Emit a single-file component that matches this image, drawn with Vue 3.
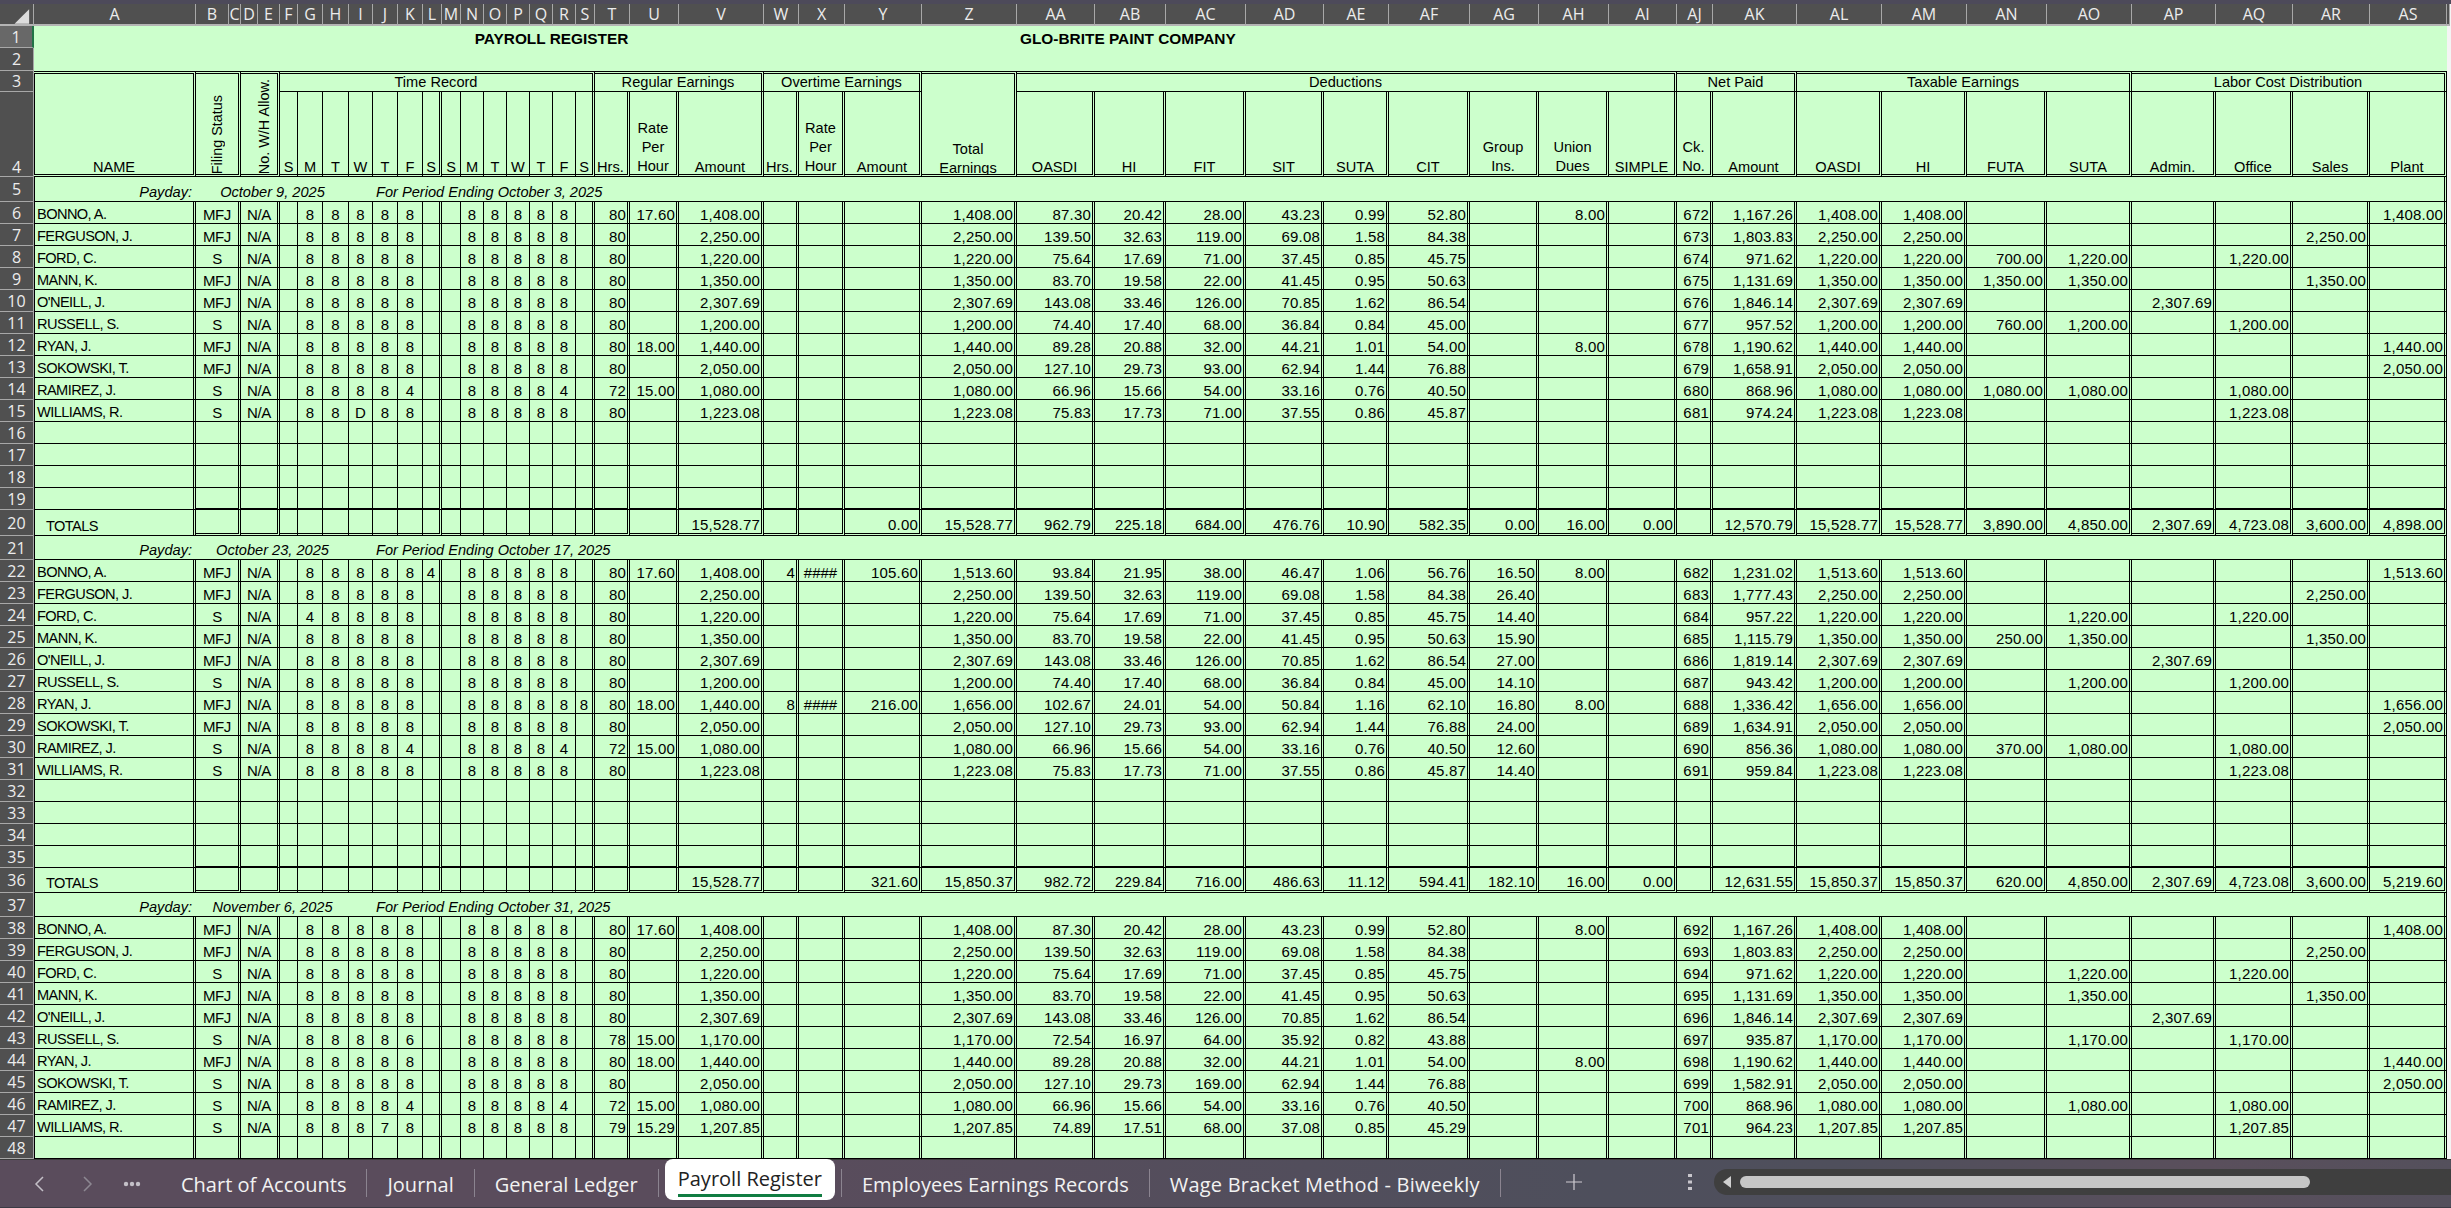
<script setup>
const letters = [...'ABCDEFGHIJKLMNOPQRSTUVWXYZ']
const cols = [...letters, ...'ABCDEFGHIJKLMNOPQRS'.split('').map((l) => 'A' + l)]
const colNo = (name) => cols.indexOf(name) + 2

const singleRight = new Set(['F', 'G', 'H', 'I', 'J', 'K', 'M', 'N', 'O', 'P', 'Q', 'R'])
const rightClass = (name) => (singleRight.has(name) ? 'rs' : 'rd')

const cells = []
let id = 0
function put(row, from, to, text, cls = [], rowSpan = 1) {
  cells.push({
    id: id++,
    text,
    cls: ['cell', rightClass(to), ...cls],
    area: `${row + 1} / ${colNo(from)} / span ${rowSpan} / span ${colNo(to) - colNo(from) + 1}`
  })
}

// Rows 1 and 2: title band
function plain(row, from, to, text = '', cls = []) {
  cells.push({
    id: id++,
    text,
    cls: ['cell', 'plain', ...cls],
    area: `${row + 1} / ${colNo(from)} / span 1 / span ${colNo(to) - colNo(from) + 1}`
  })
}
plain(1, 'A', 'D')
plain(1, 'E', 'X', 'PAYROLL REGISTER', ['title', 'ctr'])
plain(1, 'Y', 'Z')
plain(1, 'AA', 'AS', 'GLO-BRITE PAINT COMPANY', ['title'])
plain(2, 'A', 'AS')

// Rows 3 and 4: column headings
const hdr3 = ['top', 'bb', 'ctr', 'band']
const hdr4 = ['bot', 'ctr', 'hd']
put(3, 'A', 'A', 'NAME', ['top', 'bot', 'ctr', 'hd', 'lb'], 2)
put(3, 'B', 'C', 'Filing Status', ['top', 'bot', 'ctr', 'vert'], 2)
put(3, 'D', 'E', 'No. W/H Allow.', ['top', 'bot', 'end', 'vert'], 2)
put(3, 'F', 'S', 'Time Record', hdr3)
put(3, 'T', 'V', 'Regular Earnings', hdr3)
put(3, 'W', 'Y', 'Overtime Earnings', hdr3)
put(3, 'Z', 'Z', 'Total\nEarnings', ['top', 'bot', 'ctr', 'hd', 'low'], 2)
put(3, 'AA', 'AI', 'Deductions', hdr3)
put(3, 'AJ', 'AK', 'Net Paid', hdr3)
put(3, 'AL', 'AO', 'Taxable Earnings', hdr3)
put(3, 'AP', 'AS', 'Labor Cost Distribution', hdr3)
const heads4 = {
  F: 'S', G: 'M', H: 'T', I: 'W', J: 'T', K: 'F', L: 'S',
  M: 'S', N: 'M', O: 'T', P: 'W', Q: 'T', R: 'F', S: 'S',
  T: 'Hrs.', U: 'Rate\nPer\nHour', V: 'Amount', W: 'Hrs.', X: 'Rate\nPer\nHour', Y: 'Amount',
  AA: 'OASDI', AB: 'HI', AC: 'FIT', AD: 'SIT', AE: 'SUTA', AF: 'CIT',
  AG: 'Group\nIns.', AH: 'Union\nDues', AI: 'SIMPLE', AJ: 'Ck.\nNo.', AK: 'Amount',
  AL: 'OASDI', AM: 'HI', AN: 'FUTA', AO: 'SUTA',
  AP: 'Admin.', AQ: 'Office', AR: 'Sales', AS: 'Plant'
}
for (const [name, text] of Object.entries(heads4)) {
  const left = name === 'T' || name === 'W'
  const multi = text.includes('\n') ? ['multi'] : []
  put(4, name, name, text, left ? ['bot', 'hd', 'pl1'] : [...hdr4, ...multi])
}

// Payday bands
function band(row, date, period) {
  const base = ['it', 'bb']
  plain(row, 'A', 'A', 'Payday:', [...base, 'lb', 'rt', 'pr4'])
  plain(row, 'B', 'H', date, [...base, 'ctr'])
  plain(row, 'I', 'I', '', base)
  cells.push({
    id: id++,
    text: period,
    cls: ['cell', 'rd', ...base, 'pl3'],
    area: `${row + 1} / ${colNo('J')} / span 1 / span ${colNo('AS') - colNo('J') + 1}`
  })
}

const rightCols = ['T', 'U', 'V', 'W', 'X', 'Y', 'Z', 'AA', 'AB', 'AC', 'AD', 'AE', 'AF', 'AG', 'AH', 'AI', 'AJ', 'AK', 'AL', 'AM', 'AN', 'AO', 'AP', 'AQ', 'AR', 'AS']
const hourCols = ['F', 'G', 'H', 'I', 'J', 'K', 'L', 'M', 'N', 'O', 'P', 'Q', 'R', 'S']
const blank = { name: '', st: '', hrs: '              ', vals: rightCols.map(() => '') }

function emp(name, st, hrs, hr, rate, amt, ot, tot, ded, grp, uni, ck, net, futa, suta, dept) {
  const d = ded.split(' ')
  return {
    name, st, hrs,
    vals: [
      hr, rate, amt, ot[0] || '', ot[1] || '', ot[2] || '', tot, ...d, grp, uni, '', ck, net, tot, tot, futa, suta,
      dept === 'A' ? tot : '', dept === 'O' ? tot : '', dept === 'S' ? tot : '', dept === 'P' ? tot : ''
    ]
  }
}

const W = ' 88888  88888 '
const block1 = [
  emp('BONNO, A.', 'MFJ', W, '80', '17.60', '1,408.00', [], '1,408.00', '87.30 20.42 28.00 43.23 0.99 52.80', '', '8.00', '672', '1,167.26', '', '', 'P'),
  emp('FERGUSON, J.', 'MFJ', W, '80', '', '2,250.00', [], '2,250.00', '139.50 32.63 119.00 69.08 1.58 84.38', '', '', '673', '1,803.83', '', '', 'S'),
  emp('FORD, C.', 'S', W, '80', '', '1,220.00', [], '1,220.00', '75.64 17.69 71.00 37.45 0.85 45.75', '', '', '674', '971.62', '700.00', '1,220.00', 'O'),
  emp('MANN, K.', 'MFJ', W, '80', '', '1,350.00', [], '1,350.00', '83.70 19.58 22.00 41.45 0.95 50.63', '', '', '675', '1,131.69', '1,350.00', '1,350.00', 'S'),
  emp("O'NEILL, J.", 'MFJ', W, '80', '', '2,307.69', [], '2,307.69', '143.08 33.46 126.00 70.85 1.62 86.54', '', '', '676', '1,846.14', '', '', 'A'),
  emp('RUSSELL, S.', 'S', W, '80', '', '1,200.00', [], '1,200.00', '74.40 17.40 68.00 36.84 0.84 45.00', '', '', '677', '957.52', '760.00', '1,200.00', 'O'),
  emp('RYAN, J.', 'MFJ', W, '80', '18.00', '1,440.00', [], '1,440.00', '89.28 20.88 32.00 44.21 1.01 54.00', '', '8.00', '678', '1,190.62', '', '', 'P'),
  emp('SOKOWSKI, T.', 'MFJ', W, '80', '', '2,050.00', [], '2,050.00', '127.10 29.73 93.00 62.94 1.44 76.88', '', '', '679', '1,658.91', '', '', 'P'),
  emp('RAMIREZ, J.', 'S', ' 88884  88884 ', '72', '15.00', '1,080.00', [], '1,080.00', '66.96 15.66 54.00 33.16 0.76 40.50', '', '', '680', '868.96', '1,080.00', '1,080.00', 'O'),
  emp('WILLIAMS, R.', 'S', ' 88D88  88888 ', '80', '', '1,223.08', [], '1,223.08', '75.83 17.73 71.00 37.55 0.86 45.87', '', '', '681', '974.24', '', '', 'O')
]
const block2 = [
  emp('BONNO, A.', 'MFJ', ' 888884 88888 ', '80', '17.60', '1,408.00', ['4', '####', '105.60'], '1,513.60', '93.84 21.95 38.00 46.47 1.06 56.76', '16.50', '8.00', '682', '1,231.02', '', '', 'P'),
  emp('FERGUSON, J.', 'MFJ', W, '80', '', '2,250.00', [], '2,250.00', '139.50 32.63 119.00 69.08 1.58 84.38', '26.40', '', '683', '1,777.43', '', '', 'S'),
  emp('FORD, C.', 'S', ' 48888  88888 ', '80', '', '1,220.00', [], '1,220.00', '75.64 17.69 71.00 37.45 0.85 45.75', '14.40', '', '684', '957.22', '', '1,220.00', 'O'),
  emp('MANN, K.', 'MFJ', W, '80', '', '1,350.00', [], '1,350.00', '83.70 19.58 22.00 41.45 0.95 50.63', '15.90', '', '685', '1,115.79', '250.00', '1,350.00', 'S'),
  emp("O'NEILL, J.", 'MFJ', W, '80', '', '2,307.69', [], '2,307.69', '143.08 33.46 126.00 70.85 1.62 86.54', '27.00', '', '686', '1,819.14', '', '', 'A'),
  emp('RUSSELL, S.', 'S', W, '80', '', '1,200.00', [], '1,200.00', '74.40 17.40 68.00 36.84 0.84 45.00', '14.10', '', '687', '943.42', '', '1,200.00', 'O'),
  emp('RYAN, J.', 'MFJ', ' 88888  888888', '80', '18.00', '1,440.00', ['8', '####', '216.00'], '1,656.00', '102.67 24.01 54.00 50.84 1.16 62.10', '16.80', '8.00', '688', '1,336.42', '', '', 'P'),
  emp('SOKOWSKI, T.', 'MFJ', W, '80', '', '2,050.00', [], '2,050.00', '127.10 29.73 93.00 62.94 1.44 76.88', '24.00', '', '689', '1,634.91', '', '', 'P'),
  emp('RAMIREZ, J.', 'S', ' 88884  88884 ', '72', '15.00', '1,080.00', [], '1,080.00', '66.96 15.66 54.00 33.16 0.76 40.50', '12.60', '', '690', '856.36', '370.00', '1,080.00', 'O'),
  emp('WILLIAMS, R.', 'S', W, '80', '', '1,223.08', [], '1,223.08', '75.83 17.73 71.00 37.55 0.86 45.87', '14.40', '', '691', '959.84', '', '', 'O')
]
const block3 = [
  emp('BONNO, A.', 'MFJ', W, '80', '17.60', '1,408.00', [], '1,408.00', '87.30 20.42 28.00 43.23 0.99 52.80', '', '8.00', '692', '1,167.26', '', '', 'P'),
  emp('FERGUSON, J.', 'MFJ', W, '80', '', '2,250.00', [], '2,250.00', '139.50 32.63 119.00 69.08 1.58 84.38', '', '', '693', '1,803.83', '', '', 'S'),
  emp('FORD, C.', 'S', W, '80', '', '1,220.00', [], '1,220.00', '75.64 17.69 71.00 37.45 0.85 45.75', '', '', '694', '971.62', '', '1,220.00', 'O'),
  emp('MANN, K.', 'MFJ', W, '80', '', '1,350.00', [], '1,350.00', '83.70 19.58 22.00 41.45 0.95 50.63', '', '', '695', '1,131.69', '', '1,350.00', 'S'),
  emp("O'NEILL, J.", 'MFJ', W, '80', '', '2,307.69', [], '2,307.69', '143.08 33.46 126.00 70.85 1.62 86.54', '', '', '696', '1,846.14', '', '', 'A'),
  emp('RUSSELL, S.', 'S', ' 88886  88888 ', '78', '15.00', '1,170.00', [], '1,170.00', '72.54 16.97 64.00 35.92 0.82 43.88', '', '', '697', '935.87', '', '1,170.00', 'O'),
  emp('RYAN, J.', 'MFJ', W, '80', '18.00', '1,440.00', [], '1,440.00', '89.28 20.88 32.00 44.21 1.01 54.00', '', '8.00', '698', '1,190.62', '', '', 'P'),
  emp('SOKOWSKI, T.', 'S', W, '80', '', '2,050.00', [], '2,050.00', '127.10 29.73 169.00 62.94 1.44 76.88', '', '', '699', '1,582.91', '', '', 'P'),
  emp('RAMIREZ, J.', 'S', ' 88884  88884 ', '72', '15.00', '1,080.00', [], '1,080.00', '66.96 15.66 54.00 33.16 0.76 40.50', '', '', '700', '868.96', '', '1,080.00', 'O'),
  emp('WILLIAMS, R.', 'S', ' 88878  88888 ', '79', '15.29', '1,207.85', [], '1,207.85', '74.89 17.51 68.00 37.08 0.85 45.29', '', '', '701', '964.23', '', '', 'O')
]

function dataRow(row, data, extra) {
  put(row, 'A', 'A', data.name, ['bb', 'name', 'lb', ...extra.a])
  put(row, 'B', 'C', data.st, ['bb', 'ctr', 'name0', ...extra.r])
  put(row, 'D', 'E', data.na ?? (data.name ? 'N/A' : ''), ['bb', 'ctr', 'name0', ...extra.r])
  hourCols.forEach((c, i) => {
    const v = data.hrs[i].trim()
    put(row, c, c, v, ['bb', 'ctr', 'hr', ...extra.r])
  })
  rightCols.forEach((c, i) => {
    const v = data.vals[i]
    put(row, c, c, v, ['bb', 'num', v === '####' ? 'ctr' : 'rt', ...extra.r])
  })
}

function totals(row, v) {
  const all = rightCols.map(() => '')
  all[rightCols.indexOf('V')] = v[0]
  all[rightCols.indexOf('Y')] = v[1]
  const rest = v.slice(2)
  const seq = ['Z', 'AA', 'AB', 'AC', 'AD', 'AE', 'AF', 'AG', 'AH', 'AI', 'AK', 'AL', 'AM', 'AN', 'AO', 'AP', 'AQ', 'AR', 'AS']
  seq.forEach((c, i) => { all[rightCols.indexOf(c)] = rest[i] })
  dataRow(row, { name: 'TOTALS', st: '', na: '', hrs: '              ', vals: all }, { a: ['ttl'], r: ['dbot'] })
}

function block(start, list, payday, period, total) {
  band(start - 1, payday, period)
  for (let i = 0; i < 14; i++) {
    const last = i === 13
    dataRow(start + i, list[i] || blank, { a: [], r: last ? ['thick'] : [] })
  }
  totals(start + 14, total)
}

block(6, block1, 'October 9, 2025', 'For Period Ending October 3, 2025', ['15,528.77', '0.00', '15,528.77', '962.79', '225.18', '684.00', '476.76', '10.90', '582.35', '0.00', '16.00', '0.00', '12,570.79', '15,528.77', '15,528.77', '3,890.00', '4,850.00', '2,307.69', '4,723.08', '3,600.00', '4,898.00'])
block(22, block2, 'October 23, 2025', 'For Period Ending October 17, 2025', ['15,528.77', '321.60', '15,850.37', '982.72', '229.84', '716.00', '486.63', '11.12', '594.41', '182.10', '16.00', '0.00', '12,631.55', '15,850.37', '15,850.37', '620.00', '4,850.00', '2,307.69', '4,723.08', '3,600.00', '5,219.60'])
band(37, 'November 6, 2025', 'For Period Ending October 31, 2025')
block3.forEach((d, i) => dataRow(38 + i, d, { a: [], r: [] }))
dataRow(48, blank, { a: [], r: [] })

const rowNums = Array.from({ length: 48 }, (_, i) => i + 1)
const tabsLeft = ['Chart of Accounts', 'Journal', 'General Ledger']
</script>

<template>
  <div class="app">
    <div class="topline"></div>
    <div class="sheet">
      <div class="corner">
        <svg width="34" height="26" viewBox="0 0 34 26"><polygon points="15,23 30,8 30,23" fill="#dcdcdc" /></svg>
      </div>
      <div v-for="c in cols" :key="c" class="colhead">{{ c }}</div>
      <div class="colhead"></div>
      <div
        v-for="n in rowNums"
        :key="'r' + n"
        class="rowhead"
        :class="{ sel: n === 1, tall: n === 4 }"
        :style="{ gridArea: `${n + 1} / 1` }"
      >{{ n }}</div>
      <div v-for="cell in cells" :key="cell.id" :class="cell.cls" :style="{ gridArea: cell.area }"><span>{{ cell.text }}</span></div>
    </div>
    <div class="tabbar">
      <div class="nav">
        <svg class="chev" width="12" height="18" viewBox="0 0 12 18"><path d="M10 2 L3 9 L10 16" fill="none" stroke="#c4c0c8" stroke-width="1.5" /></svg>
        <svg class="chev next" width="12" height="18" viewBox="0 0 12 18"><path d="M2 2 L9 9 L2 16" fill="none" stroke="#8d8892" stroke-width="1.5" /></svg>
        <svg class="more" width="18" height="6" viewBox="0 0 18 6"><circle cx="3" cy="3" r="2.2" fill="#c4c0c8" /><circle cx="9" cy="3" r="2.2" fill="#c4c0c8" /><circle cx="15" cy="3" r="2.2" fill="#c4c0c8" /></svg>
      </div>
      <template v-for="t in tabsLeft" :key="t">
        <div class="tab">{{ t }}</div>
        <i class="sep"></i>
      </template>
      <div class="tab active"><span class="label">Payroll Register</span></div>
      <i class="sep"></i>
      <div class="tab">Employees Earnings Records</div>
      <i class="sep"></i>
      <div class="tab wage">Wage Bracket Method - Biweekly</div>
      <i class="sep"></i>
      <svg class="plus" width="18" height="18" viewBox="0 0 18 18"><path d="M9 1 V17 M1 9 H17" stroke="#cfccd2" stroke-width="1.2" /></svg>
      <svg class="vdots" width="6" height="18" viewBox="0 0 6 18"><rect x="1" y="1" width="4" height="3" fill="#c8c6cc" /><rect x="1" y="7.5" width="4" height="3" fill="#c8c6cc" /><rect x="1" y="14" width="4" height="3" fill="#c8c6cc" /></svg>
      <div class="track">
        <svg class="arrow" width="10" height="12" viewBox="0 0 10 12"><polygon points="9,0 9,12 1,6" fill="#d0d0d0" /></svg>
        <div class="thumb"></div>
      </div>
    </div>
  </div>
</template>

<style>
html, body { margin: 0; overflow: hidden; background: #4e4a5a; }
</style>

<style scoped>
.app {
  width: 2451px;
  height: 1208px;
  display: flex;
  flex-direction: column;
  overflow: hidden;
  background: #4e4a5a;
}
.topline { height: 4px; flex: none; background: #4d4a5a; }
.sheet {
  flex: 1;
  min-height: 0;
  overflow: hidden;
  display: grid;
  background: #f4f4f4;
  font-family: "Liberation Sans", Arial, sans-serif;
  font-size: 14.6px;
  color: #000;
  grid-template-columns:
    34px 162px 33px 12px 17px 22px 18px 25px 26px 24px 25px 25px 19px 19px 23px 23px 23px 23px 23px 19px
    35px 49px 85px 35px 46px 77px 95px 78px 71px 80px 78px 65px 81px 69px 70px 68px 36px 84px 85px 85px 80px 85px 84px 77px 77px 77px 3px;
  grid-template-rows:
    22px 22px 23px 21px 85px 25px
    repeat(14, 22px) 26px 24px
    repeat(14, 22px) 25px 24px
    repeat(11, 22px);
}
.corner, .colhead, .rowhead {
  background: #505050;
  color: #ececec;
  font-family: "Open Sans", "Noto Sans", sans-serif;
  font-size: 16px;
  box-sizing: border-box;
  display: flex;
  align-items: center;
  justify-content: center;
}
.corner { border-right: 1px solid #a8a8a8; border-bottom: 2px solid #b4b4b4; }
.colhead { border-right: 1px solid #a8a8a8; border-bottom: 2px solid #b4b4b4; overflow: hidden; }
.rowhead { border-right: 1px solid #a8a8a8; border-bottom: 1px solid #a8a8a8; }
.rowhead.sel { background: #686868; border-right: 2px solid #217346; }
.rowhead.tall { align-items: flex-end; line-height: 18px; }

.cell {
  box-sizing: border-box;
  background: #ccffcc;
  display: flex;
  align-items: flex-end;
  white-space: pre;
  line-height: 17px;
  min-width: 0;
  overflow: hidden;
}
.cell span { display: block; }
.rd { border-right: 3px double #000; }
.rs { border-right: 1px solid #000; }
.bb { border-bottom: 1px solid #000; }
.thick { border-bottom: 2px solid #000; }
.dbot { border-bottom: 3px double #000; }
.top { border-top: 3px double #000; }
.bot { border-bottom: 3px double #000; }
.lb { border-left: 1px solid #000; }
.ctr { justify-content: center; text-align: center; }
.rt { justify-content: flex-end; text-align: right; }
.end { justify-content: flex-end; padding-right: 3px; }
.pl1 { padding-left: 2px; }
.pl3 { padding-left: 3px; }
.pr4 { padding-right: 4px; }
.hd { line-height: 19px; }
.hd span { margin-bottom: -3px; }
.hd.multi span { margin-bottom: -2px; }
.hd.low span { margin-bottom: -4px; }
.hr { font-size: 15px; }
.num { padding-right: 1px; font-size: 15px; letter-spacing: 0.2px; }
.num.ctr { padding-right: 0; letter-spacing: 0; }
.name { padding-left: 2px; letter-spacing: -0.58px; }
.name0 { font-size: 15px; letter-spacing: -0.4px; }
.ttl { padding-left: 11px; }
.it { font-style: italic; }
.title { font-weight: 700; font-size: 15.4px; padding-bottom: 1px; }
.plain.title:not(.ctr) { padding-left: 3px; }
.vert span {
  writing-mode: vertical-rl;
  transform: rotate(180deg);
  line-height: 20px;
  font-size: 14.4px;
}

.tabbar {
  flex: none;
  height: 49px;
  box-sizing: border-box;
  display: flex;
  align-items: flex-start;
  border-top: 1px solid #3c3c3c;
  border-bottom: 1px solid #3a3a44;
  background: linear-gradient(90deg, #5a4c5c 0%, #5a4c5c 30%, #4e4f5c 65%, #4f4f5c 75%, #5a4f5c 90%, #54505c 100%);
  font-family: "Open Sans", "Noto Sans", sans-serif;
  font-size: 20px;
  color: #f2f2f2;
}
.nav { width: 161px; flex: none; height: 47px; display: flex; align-items: center; }
.chev { margin-left: 33px; flex: none; }
.chev.next { margin-left: 37px; }
.more { margin-left: 29px; flex: none; }
.tab {
  flex: none;
  padding: 0 20px;
  height: 47px;
  line-height: 50px;
  white-space: nowrap;
}
.tab.wage { letter-spacing: 0.2px; }
.sep { flex: none; width: 1px; height: 28px; margin-top: 9px; background: #8b8490; }
.tab.active {
  background: #fff;
  color: #222;
  height: 41px;
  margin: -1px 6px 0;
  padding: 0 13px;
  border-radius: 8px;
  line-height: 40px;
}
.label { display: block; height: 35px; border-bottom: 3px solid #107c41; line-height: 39px; }
.plus { margin: 13px 0 0 64px; flex: none; }
.vdots { margin: 13px 0 0 104px; flex: none; }
.track {
  flex: 1;
  margin: 9px 0 0 21px;
  height: 26px;
  border-radius: 13px 0 0 13px;
  background: #3f3f3f;
  display: flex;
  align-items: center;
  padding-left: 8px;
}
.arrow { flex: none; }
.thumb { margin-left: 8px; width: 570px; height: 12px; border-radius: 6px; background: #c6c6c6; }
</style>
